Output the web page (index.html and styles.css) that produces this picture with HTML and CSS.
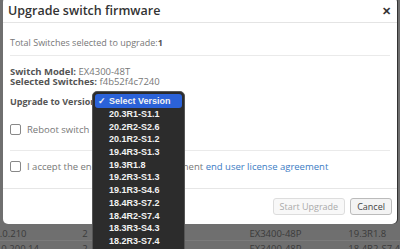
FILE: index.html
```html
<!DOCTYPE html>
<html lang="en">
<head>
  <meta charset="UTF-8">
  <title>Upgrade switch firmware</title>
  <link rel="stylesheet" href="styles.css">
</head>
<body>
<div class="page">
  <table class="switch-table">
    <tr><td class="c-ip">10.0.0.210</td><td class="c-n">2</td><td class="c-model">EX3400-48P</td><td class="c-ver">19.3R1.8</td></tr>
    <tr><td class="c-ip">10.0.200.14</td><td class="c-n">2</td><td class="c-model">EX3400-48P</td><td class="c-ver">18.4R2-S7.4</td></tr>
  </table>
</div>

<div class="modal">
  <div class="modal-header">
    <h3>Upgrade switch firmware</h3>
    <span class="close">&#x2715;</span>
  </div>
  <div class="modal-body">
    <p class="total">Total Switches selected to upgrade:<b>1</b></p>
    <hr>
    <p class="info first"><b>Switch Model:</b> EX4300-48T</p>
    <p class="info"><b>Selected Switches:</b> f4b52f4c7240</p>
    <p class="version"><b>Upgrade to Version</b></p>
    <label class="check reboot"><span class="box"></span>Reboot switch after image copy</label>
    <hr>
    <label class="check accept"><span class="box"></span>I accept the end user license agreement&nbsp;<a href="#">end user license agreement</a></label>
  </div>
  <div class="modal-footer">
    <button class="btn disabled">Start Upgrade</button>
    <button class="btn">Cancel</button>
  </div>
</div>

<ul class="version-menu">
  <li class="selected"><span class="tick">&#x2713;</span>Select Version</li>
  <li>20.3R1-S1.1</li>
  <li>20.2R2-S2.6</li>
  <li>20.1R2-S1.2</li>
  <li>19.4R3-S1.3</li>
  <li>19.3R1.8</li>
  <li>19.2R3-S1.3</li>
  <li>19.1R3-S4.6</li>
  <li>18.4R3-S7.2</li>
  <li>18.4R2-S7.4</li>
  <li>18.3R3-S4.3</li>
  <li>18.2R3-S7.4</li>
</ul>
</body>
</html>
```

FILE: styles.css
```css
body { margin: 0; width: 400px; height: 249px; overflow: hidden; background: #6f6f6f; font-family: "Open Sans", sans-serif; position: relative; }

.page { padding-top: 226px; }
.switch-table { width: 100%; border-collapse: collapse; font-size: 9.5px; color: #3b3b3b; }
.switch-table td { height: 14px; padding: 0; border-bottom: 1px solid #7b7b7b; white-space: nowrap; }
.switch-table .c-ip { width: 85px; text-indent: -19px; }
.switch-table tr + tr .c-ip { text-indent: -12px; }
.switch-table .c-n { width: 178px; }
.switch-table .c-model { width: 102px; }

.modal { position: absolute; left: 3px; top: -3px; width: 394px; height: 227px; background: #fff; border-radius: 5px; display: flex; flex-direction: column; box-shadow: 1px 0 0 #333; }
.modal-header { display: flex; align-items: center; justify-content: space-between; height: 23px; padding: 2px 6px 0 5px; border-bottom: 1px solid #e4e4e4; }
.modal-header h3 { margin: 0; font-size: 12.5px; font-weight: 600; color: #333; }
.close { font-size: 11px; font-weight: bold; color: #333; }

.modal-body { padding: 0 7px; flex: 1; font-size: 9px; color: #777; }
.modal-body p { margin: 0; }
.modal-body b { color: #555; }
.modal-body hr { border: 0; border-top: 1px solid #eaeaea; margin: 0; }
.total { padding: 13px 0 6px; }
.info { line-height: 10px; font-size: 9.5px; }
.info.first { margin-top: 11px !important; }
.version { margin-top: 9px !important; line-height: 12px; }
.check { display: flex; align-items: center; font-size: 9.5px; color: #777; white-space: nowrap; }
.check.reboot { margin-top: 9px; height: 24px; margin-bottom: 9px; }
.check.accept { height: 30px; }
.check .box { width: 9px; height: 9px; border: 1px solid #888; border-radius: 2px; margin-right: 6px; flex: none; }
.check a { color: #3b7bc4; text-decoration: none; }

.modal-footer { display: flex; justify-content: flex-end; gap: 5px; height: 35px; padding: 0 5px; align-items: center; border-top: 1px solid #e6e6e6; }
.btn { font-family: "Open Sans", sans-serif; font-size: 9px; color: #444; background: #f3f3f3; border: 1px solid #bbb; border-radius: 3px; height: 17px; padding: 0 6px; }
.btn.disabled { color: #aaa; background: #f8f8f8; border-color: #ddd; }

.version-menu { position: absolute; left: 92px; top: 91px; width: 87px; height: 170px; margin: 0; padding: 2px; list-style: none; background: #2c2c2c; border: 1px solid #555; border-radius: 5px; font-family: "Liberation Sans", Arial, sans-serif; font-size: 9px; font-weight: bold; color: #f2f2f2; }
.version-menu li { height: 12.7px; line-height: 12.7px; padding-left: 14px; position: relative; border-radius: 3px; }
.version-menu li.selected { background: #2b62d9; height: 14px; line-height: 14px; }
.version-menu .tick { position: absolute; left: 3px; }
```
